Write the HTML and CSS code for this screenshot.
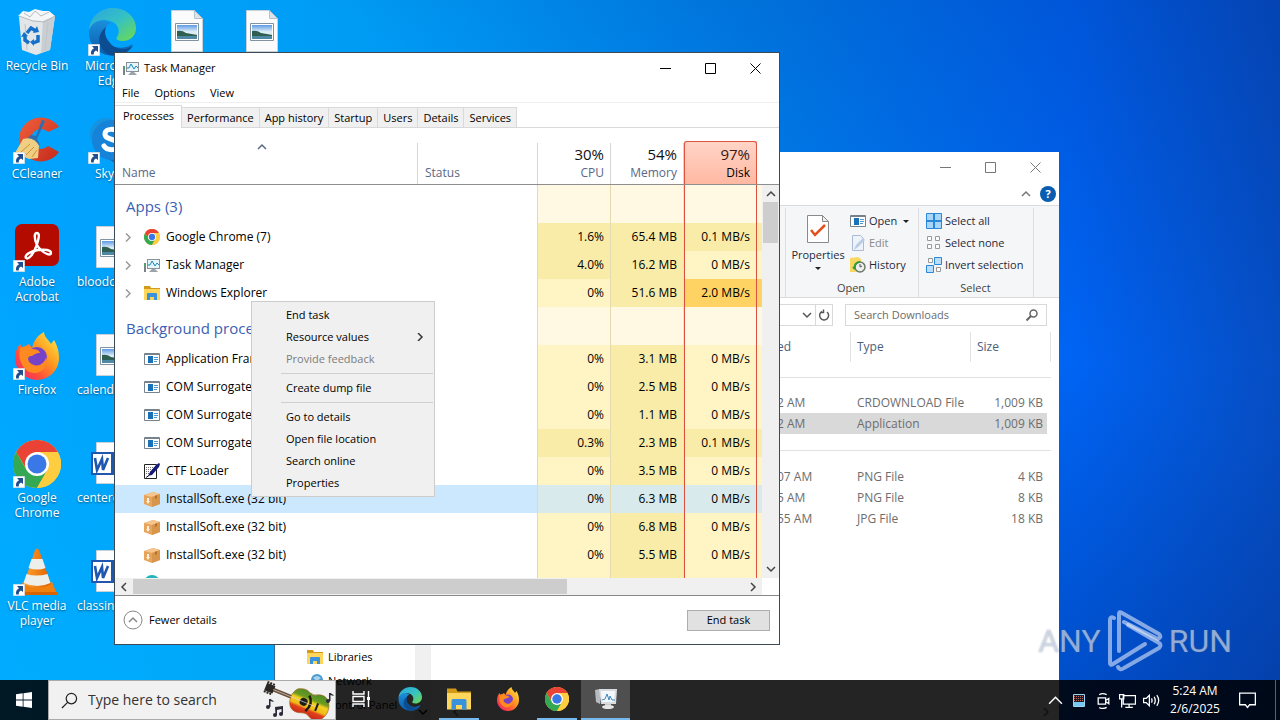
FILE: index.html
```html
<!DOCTYPE html>
<html lang="en">
<head>
<meta charset="utf-8">
<title>Desktop</title>
<link rel="stylesheet" href="styles.css">
</head>
<body>
<svg class="defs" aria-hidden="true">
  <defs>
    <linearGradient id="gEdgeA" x1="0" y1="0" x2="1" y2="1"><stop offset="0" stop-color="#2aa5e0"/><stop offset=".5" stop-color="#35c1c4"/><stop offset="1" stop-color="#6fdc4b"/></linearGradient>
    <linearGradient id="gEdgeB" x1="0" y1="0" x2="0" y2="1"><stop offset="0" stop-color="#1b8fdc"/><stop offset="1" stop-color="#0a5aa8"/></linearGradient>
    <linearGradient id="gFox" x1="1" y1="0" x2="0" y2="1"><stop offset="0" stop-color="#fff44f"/><stop offset=".4" stop-color="#ff9a1f"/><stop offset=".7" stop-color="#ff4a3c"/><stop offset="1" stop-color="#e8208a"/></linearGradient>
    <linearGradient id="gSky" x1="0" y1="0" x2="0" y2="1"><stop offset="0" stop-color="#5c9ae4"/><stop offset=".5" stop-color="#e4f1f8"/><stop offset="1" stop-color="#a4cce0"/></linearGradient>
    <linearGradient id="gRed" x1="0" y1="0" x2="1" y2="1"><stop offset="0" stop-color="#f0603c"/><stop offset="1" stop-color="#c42a1c"/></linearGradient>
    <linearGradient id="gCone" x1="0" y1="0" x2="1" y2="0"><stop offset="0" stop-color="#ffa12e"/><stop offset="1" stop-color="#e06000"/></linearGradient>
    <linearGradient id="gGuitar" x1="0" y1="0" x2="0" y2="1"><stop offset="0" stop-color="#4c8c28"/><stop offset=".3" stop-color="#6c9c20"/><stop offset=".42" stop-color="#f4d020"/><stop offset=".65" stop-color="#f0b818"/><stop offset=".75" stop-color="#e0401c"/><stop offset="1" stop-color="#c82818"/></linearGradient>
  </defs>
  <symbol id="shortcut" viewBox="0 0 12 12"><path fill="#fff" stroke="#b8c4d0" stroke-width=".5" d="M.2.2h11.6v11.6H.2z"/><path fill="#1f4f8f" d="M4 2h6v6L8 6.400Q5.500 7.500 5.800 10.500H3.200Q2 6.500 6 4.200z"/></symbol>
  <symbol id="recycle" viewBox="0 0 48 48"><path fill="#e3e6e8" d="M6 9l36-1-5 34-14 5-14-5z"/><path fill="#c9ced2" d="M30 12l12-4-5 34-9 3z"/><path fill="#f4f6f7" d="M5 8l5-5 6 1 6-3 8 2 6 0 6 5-12 5-12-1z"/><path fill="none" stroke="#b4babf" d="M11 5l6 4 5-6 6 5 8-4M6 8l14 5 11 1 11-6"/><path fill="none" stroke="#c0c5c9" d="M12 16l2 26M35 15l-3 27"/><g fill="none" stroke="#1470c8" stroke-width="3.500"><path d="M14 25l4-5 5 3M25 27l0 6-5 2M16 35l-4-3 0-5"/></g><path fill="#1470c8" d="M20 25l6-1-2-6zM21 31v7l-4-4zM8 29l7-1-4-4z"/></symbol>
  <symbol id="edge" viewBox="0 0 48 48"><path fill="url(#gEdgeB)" d="M1 23C3 13 14 9 23 15c-8 3-8 14-2 20s15 6 22 2c2-1 2 0 1 1C33 55 0 49 1 23z"/><path fill="#0c4d92" d="M18 19c-11 9-8 23 4 28 9 2 17-1 23-9-7 5-18 4-23-3-5-5-6-11-4-16z"/><path fill="url(#gEdgeA)" d="M1 22C2 8 13 0 25 0c14 0 23 10 23 20 0 8-6 13-13 13-5 0-8-2-6-4 4-6 1-14-7-16C13 10 4 14 1 22z"/></symbol>
  <symbol id="ccleaner" viewBox="0 0 48 48"><path fill="url(#gRed)" d="M46 11A22 22 0 1 0 46 36l-11-6a10 10 0 1 1 0-14z"/><path fill="#2c6fb0" d="M29 4l3 1-8 18 3 6-15-4 6-6 5 1z"/><path fill="#f1cf82" d="M10 23q11-3 16 7l-1 12-9 1-14-6z"/><path stroke="#c9923c" fill="none" d="M8 36l9-8M13 39l8-8M19 41l5-7"/></symbol>
  <symbol id="skype" viewBox="0 0 48 48"><circle cx="18" cy="18" r="16" fill="#1592e0"/><circle cx="31" cy="31" r="16" fill="#1166b8"/><circle cx="24" cy="24" r="20" fill="#1683d8"/><path fill="none" stroke="#fff" stroke-width="5" stroke-linecap="round" d="M31 17c-3-5-14-5-14 1 0 7 14 4 14 11 0 6-12 6-15 1"/></symbol>
  <symbol id="acrobat" viewBox="0 0 48 48"><rect x="2" width="44" height="42" rx="7" fill="#b40b00"/><path fill="none" stroke="#fff" stroke-width="2.400" stroke-linejoin="round" d="M24 21c-3-7-3-12 0-12s2 6-1 14-8 13-10 11c-2-3 5-7 12-8s13 0 13 3-6 1-10-3c-3-3-4-5-4-5z"/></symbol>
  <symbol id="firefox" viewBox="0 0 48 48"><path fill="url(#gFox)" d="M7 12l2 4 7-4 3 4C21 8 25 3 31 0c0 5 5 8 7 12l3-4c4 7 5 12 5 18A22 22 0 0 1 2 26C2 20 4 16 7 12z"/><circle cx="24" cy="25" r="10" fill="#7542c8"/><path fill="#ff8a20" d="M7 16c5-2 9-2 12 1 4 0 7 1 8 4-5 0-6 2-8 3-6-1-5 7 2 9 5 2 11-2 12-8 3 8-3 16-12 16S4 29 7 16z"/></symbol>
  <symbol id="chrome" viewBox="0 0 48 48"><circle cx="24" cy="24" r="24" fill="#ffcd40"/><path fill="#ea4335" d="M3.200 12A24 24 0 0 1 44.800 12H24L14 30z"/><path fill="#34a853" d="M3.200 12A24 24 0 0 0 24 48l10.400-18-20.800 0z"/><path fill="#ffcd40" d="M44.800 12A24 24 0 0 1 24 48l10.400-18L34 12z"/><circle cx="24" cy="24" r="12" fill="#fff"/><circle cx="24" cy="24" r="9.500" fill="#3b78e7"/></symbol>
  <symbol id="vlc" viewBox="0 0 48 48"><path fill="#f08010" d="M10 34h29l5 12H4z"/><path fill="#d86400" d="M4 44h40v3H4z"/><path fill="url(#gCone)" d="M22 2q2-3 4 0l12 34q-13 8-27 0z"/><path fill="#eeeeea" d="M18.500 11h11l3 9q-8 3-17 0zM13.500 26q10 3 21 0l3 9q-13 6-27 0z"/></symbol>
  <symbol id="picture" viewBox="0 0 32 42"><path fill="#fbfbfb" stroke="#c8d0d8" d="M.5.500h23l8 8v33H.5z"/><path fill="#dde3e8" stroke="#b8c0c8" d="M23.500.500v8h8z"/><path fill="#fff" stroke="#8392a0" d="M4.500 13.500h23v17h-23z"/><path fill="url(#gSky)" d="M6 15h20v14H6z"/><path fill="#2f5f50" d="M6 21q5-1 9 2l11 2v1H6z"/><path fill="#4d88a4" d="M6 26h20v3H6z"/></symbol>
  <symbol id="word" viewBox="0 0 37 42"><path fill="#fdfdfd" stroke="#c8d0d8" d="M5.500.500h24l7 8v33h-31z"/><path fill="#1e56b0" d="M0 10h23v23H0z"/><path fill="#fff" d="M2 12h18v19H2z"/><path fill="none" stroke="#1e56b0" stroke-width="2.600" d="M4 16l2 12 5-11 1 11 5-12"/></symbol>
  <symbol id="monitor" viewBox="0 0 16 16"><path fill="#8a9298" d="M3 2h13v10H3z"/><path fill="#e6f5fc" d="M4 3h11v8H4z"/><path fill="none" stroke="#1c86b4" d="M4 8h2l2-4 3 5 2-3 2 2"/><path fill="#79828a" d="M0 6h2v9H0z"/><path fill="#47a860" d="M0 7h2v2H0z"/><path fill="#9ca4aa" d="M8 12h3l3 3H5z"/></symbol>
  <symbol id="folder" viewBox="0 0 16 16"><path fill="#d29a18" d="M0 1h6l1 2h9v4H0z"/><path fill="#ffd65c" d="M0 4h16v11H0z"/><path fill="#3a92dc" d="M3 9q0-1 1-1h8q1 0 1 1v6h-3v-3H6v3H3z"/></symbol>
  <symbol id="app" viewBox="0 0 16 16"><path fill="#fff" stroke="#76838c" d="M.5 2.500h15v11H.5z"/><path fill="#76838c" d="M1 2h14v2H1z"/><path fill="#1971b8" d="M4 5h5v7H4z"/><path stroke="#4c98cc" d="M10 6.500h4M10 8.500h4M10 10.500h3"/></symbol>
  <symbol id="pen" viewBox="0 0 16 16"><path fill="#fff" stroke="#222" d="M.5 1.500h12v14H.5z"/><path stroke="#777" stroke-dasharray="1 1" d="M2 4.500h9M2 6.500h7M2 8.500h5M2 10.500h3"/><path fill="#151a78" d="M4 13l2-4 6-7 3-2 1 1-1 3-7 8z"/><path stroke="#090d30" d="M2 14.500l3-2"/></symbol>
  <symbol id="box" viewBox="0 0 16 16"><path fill="#e8a45a" d="M0 4l9-3 7 2v10l-8 3-8-3z"/><path fill="#f5c58d" d="M0 4l9-3 7 2-8 3z"/><path fill="#d8954c" d="M8 6l8-3v10l-8 3z"/><path fill="#fff1de" d="M3 7h2v3h1l-2 3-2-3h1z"/><path fill="#b86c2c" d="M11 5l2-1v3l-2 1z"/></symbol>
  <symbol id="teal" viewBox="0 0 16 16"><circle cx="8" cy="8" r="8" fill="#23b4bc"/></symbol>
  <symbol id="globe" viewBox="0 0 16 16"><circle cx="10" cy="7" r="6" fill="#4a9ad0"/><path fill="#a8d4ec" d="M6 5q4-4 8 0l-4 3z"/><path fill="#5a8fb4" d="M0 7h9v6H0z"/><path fill="#b7dced" d="M1 8h7v4H1z"/></symbol>
  <symbol id="chev" viewBox="0 0 8 8"><path fill="none" stroke="currentColor" stroke-width="1.500" d="M2 0l4 4-4 4"/></symbol>
  <symbol id="up" viewBox="0 0 10 10"><path fill="none" stroke="currentColor" stroke-width="1.500" d="M1 7l4-4 4 4"/></symbol>
  <symbol id="min" viewBox="0 0 11 11"><path stroke="currentColor" d="M0 5.500h11"/></symbol>
  <symbol id="max" viewBox="0 0 11 11"><path fill="none" stroke="currentColor" d="M.5.500h10v10H.5z"/></symbol>
  <symbol id="close" viewBox="0 0 11 11"><path stroke="currentColor" d="M.5.500l10 10M10.500.500l-10 10"/></symbol>
</svg>

<main class="desktop">
  <div class="shortcuts">
    <a class="shortcut" href="#"><span class="pic"><svg><use href="#recycle"/></svg></span>Recycle Bin</a>
    <a class="shortcut" href="#"><span class="pic"><svg><use href="#ccleaner"/></svg><svg class="arrow"><use href="#shortcut"/></svg></span>CCleaner</a>
    <a class="shortcut" href="#"><span class="pic"><svg><use href="#acrobat"/></svg><svg class="arrow"><use href="#shortcut"/></svg></span>Adobe Acrobat</a>
    <a class="shortcut" href="#"><span class="pic"><svg><use href="#firefox"/></svg><svg class="arrow"><use href="#shortcut"/></svg></span>Firefox</a>
    <a class="shortcut" href="#"><span class="pic"><svg><use href="#chrome"/></svg><svg class="arrow"><use href="#shortcut"/></svg></span>Google Chrome</a>
    <a class="shortcut" href="#"><span class="pic"><svg><use href="#vlc"/></svg><svg class="arrow"><use href="#shortcut"/></svg></span>VLC media player</a>
    <a class="shortcut" href="#"><span class="pic"><svg><use href="#edge"/></svg><svg class="arrow"><use href="#shortcut"/></svg></span>Microsoft Edge</a>
    <a class="shortcut" href="#"><span class="pic"><svg><use href="#skype"/></svg><svg class="arrow"><use href="#shortcut"/></svg></span>Skype</a>
    <a class="shortcut file" href="#"><span class="pic"><svg><use href="#picture"/></svg></span>bloodc</a>
    <a class="shortcut file" href="#"><span class="pic"><svg><use href="#picture"/></svg></span>calenda</a>
    <a class="shortcut file word" href="#"><span class="pic"><svg><use href="#word"/></svg></span>centerc</a>
    <a class="shortcut file word" href="#"><span class="pic"><svg><use href="#word"/></svg></span>classin</a>
    <a class="shortcut file third" href="#" aria-label="Picture"><span class="pic"><svg><use href="#picture"/></svg></span></a>
    <a class="shortcut file fourth" href="#" aria-label="Picture"><span class="pic"><svg><use href="#picture"/></svg></span></a>
  </div>

  <section class="window explorer" aria-label="Downloads">
    <div class="titlebar">
      <button class="winbtn" aria-label="Minimize"><svg><use href="#min"/></svg></button>
      <button class="winbtn" aria-label="Maximize"><svg><use href="#max"/></svg></button>
      <button class="winbtn" aria-label="Close"><svg><use href="#close"/></svg></button>
    </div>
    <div class="ribbon-top">
      <button class="plain" aria-label="Collapse ribbon"><svg class="s10"><use href="#up"/></svg></button>
      <button class="help" aria-label="Help">?</button>
    </div>
    <div class="ribbon">
      <div class="rgroup open">
        <div class="rbody">
          <button class="big"><svg viewBox="0 0 22 28"><path fill="#fff" stroke="#8a8a8a" d="M.5.500h15l6 6v21H.5z"/><path fill="#eee" stroke="#8a8a8a" d="M15.500.500v6h6z"/><path fill="none" stroke="#e2501c" stroke-width="2.500" d="M4 15l4 5 10-10"/></svg>Properties<i class="tri"></i></button>
          <div class="rlist">
            <button class="rbtn"><svg><use href="#app"/></svg>Open<i class="tri"></i></button>
            <button class="rbtn off"><svg viewBox="0 0 16 16"><path fill="#eef3fa" stroke="#a9bcd4" d="M2.500.500h8l3 3v12h-11z"/><path fill="#b9cce6" d="M4 15l2-5 7-7 2 2-7 7z"/></svg>Edit</button>
            <button class="rbtn"><svg viewBox="0 0 16 16"><path fill="#f8d860" d="M0 1l8-1 3 2v13H0z"/><circle cx="10" cy="10" r="5" fill="#eee" stroke="#6a7a6a" stroke-width="1.500"/><path fill="none" stroke="#2f9e3c" stroke-width="2" d="M10 5a5 5 0 0 0-5 7l-2-2"/><path fill="none" stroke="#555" d="M10 7v3l2-1"/></svg>History</button>
          </div>
        </div>
        <span class="rlabel">Open</span>
      </div>
      <div class="rgroup select">
        <div class="rbody"><div class="rlist">
          <button class="rbtn"><svg viewBox="0 0 16 16"><path fill="#a9d6f8" stroke="#2a88d8" d="M.5.500h15v15H.5z"/><path stroke="#2a88d8" stroke-width="2" d="M8 0v16M0 8h16"/></svg>Select all</button>
          <button class="rbtn"><svg viewBox="0 0 16 16"><path fill="#fff" stroke="#999" d="M1.500 1.500h4v4h-4zM9.500 1.500h4v4h-4zM1.500 9.500h4v4h-4zM9.500 9.500h4v4h-4z"/></svg>Select none</button>
          <button class="rbtn"><svg viewBox="0 0 16 16"><path fill="#fff" stroke="#999" d="M2.500 1.500h4v4h-4zM10.500 10.500h4v4h-4z"/><path fill="#b8defa" stroke="#2a88d8" d="M8.500.500h7v7h-7zM.5 8.500h7v7h-7z"/></svg>Invert selection</button>
        </div></div>
        <span class="rlabel">Select</span>
      </div>
    </div>
    <div class="address">
      <div class="path"><button class="plain" aria-label="Previous locations"><svg class="s10 down"><use href="#up"/></svg></button><button class="plain refresh" aria-label="Refresh"><svg class="s12" viewBox="0 0 12 12"><path fill="none" stroke="#555" stroke-width="1.500" d="M9 3a4.500 4.500 0 1 1-5-.5M5.500.500v3h-3"/></svg></button></div>
      <label class="search"><input type="text" placeholder="Search Downloads" aria-label="Search Downloads"><svg class="s12" viewBox="0 0 12 12"><circle cx="7.500" cy="4.500" r="3.500" fill="none" stroke="#666" stroke-width="1.500"/><path stroke="#666" stroke-width="2" d="M5 7l-4.500 4.500"/></svg></label>
    </div>
    <div class="panes">
      <nav class="tree">
        <a href="#"><svg><use href="#folder"/></svg>Libraries</a>
        <a href="#"><svg><use href="#globe"/></svg>Network</a>
        <a href="#"><svg><use href="#app"/></svg>Control Panel</a>
      </nav>
      <div class="vtrack"><svg class="s10 down"><use href="#up"/></svg></div>
      <div class="files">
        <table class="filetable">
          <colgroup><col><col class="c-type"><col class="c-size"></colgroup>
          <thead><tr><th>ed</th><th>Type</th><th>Size</th></tr></thead>
          <tbody class="first"><tr class="gap"><td colspan="3"></td></tr>
            <tr><td>2 AM</td><td>CRDOWNLOAD File</td><td>1,009 KB</td></tr>
            <tr class="chosen"><td>2 AM</td><td>Application</td><td>1,009 KB</td></tr></tbody>
          <tbody class="second"><tr class="gap"><td colspan="3"></td></tr>
            <tr><td>07 AM</td><td>PNG File</td><td>4 KB</td></tr>
            <tr><td>5 AM</td><td>PNG File</td><td>8 KB</td></tr>
            <tr><td>55 AM</td><td>JPG File</td><td>18 KB</td></tr></tbody>
        </table>
        <div class="fscroll"><svg class="s10 left"><use href="#up"/></svg><svg class="s10 right"><use href="#up"/></svg></div>
      </div>
    </div>
  </section>

  <section class="window taskmgr" aria-label="Task Manager">
    <div class="titlebar">
      <svg class="s16"><use href="#monitor"/></svg><h1>Task Manager</h1>
      <button class="winbtn" aria-label="Minimize"><svg><use href="#min"/></svg></button>
      <button class="winbtn" aria-label="Maximize"><svg><use href="#max"/></svg></button>
      <button class="winbtn" aria-label="Close"><svg><use href="#close"/></svg></button>
    </div>
    <div class="menubar"><button>File</button><button>Options</button><button>View</button></div>
    <div class="tabs"><button class="active">Processes</button><button>Performance</button><button>App history</button><button>Startup</button><button>Users</button><button>Details</button><button>Services</button></div>
    <div class="list">
      <div class="viewport">
        <table class="procs">
          <colgroup><col><col class="c-status"><col class="c-num"><col class="c-num"><col class="c-num"><col class="c-tail"></colgroup>
          <thead><tr>
            <th class="name"><svg class="s10 sort"><use href="#up"/></svg>Name</th><th class="status">Status</th>
            <th><b>30%</b>CPU</th><th><b>54%</b>Memory</th><th class="disk"><b>97%</b>Disk</th><th class="tail"></th></tr></thead>
          <tbody>
            <tr class="group"><th>Apps (3)</th><td></td><td></td><td></td><td></td><td></td></tr>
            <tr><td><span class="proc"><svg class="chev"><use href="#chev"/></svg><svg class="s16"><use href="#chrome"/></svg>Google Chrome (7)</span></td><td></td><td class="mid">1.6%</td><td class="mid">65.4 MB</td><td class="mid">0.1 MB/s</td><td class="mid"></td></tr>
            <tr><td><span class="proc"><svg class="chev"><use href="#chev"/></svg><svg class="s16"><use href="#monitor"/></svg>Task Manager</span></td><td></td><td class="mid">4.0%</td><td class="mid">16.2 MB</td><td>0 MB/s</td><td></td></tr>
            <tr><td><span class="proc"><svg class="chev"><use href="#chev"/></svg><svg class="s16"><use href="#folder"/></svg>Windows Explorer</span></td><td></td><td>0%</td><td class="mid">51.6 MB</td><td class="high">2.0 MB/s</td><td class="high"></td></tr>
            <tr class="group"><th>Background processes</th><td></td><td></td><td></td><td></td><td></td></tr>
            <tr><td><span class="proc flat"><svg class="s16"><use href="#app"/></svg>Application Frame Host</span></td><td></td><td>0%</td><td class="mid">3.1 MB</td><td>0 MB/s</td><td></td></tr>
            <tr><td><span class="proc flat"><svg class="s16"><use href="#app"/></svg>COM Surrogate</span></td><td></td><td>0%</td><td class="mid">2.5 MB</td><td>0 MB/s</td><td></td></tr>
            <tr><td><span class="proc flat"><svg class="s16"><use href="#app"/></svg>COM Surrogate</span></td><td></td><td>0%</td><td class="mid">1.1 MB</td><td>0 MB/s</td><td></td></tr>
            <tr><td><span class="proc flat"><svg class="s16"><use href="#app"/></svg>COM Surrogate</span></td><td></td><td class="mid">0.3%</td><td class="mid">2.3 MB</td><td class="mid">0.1 MB/s</td><td class="mid"></td></tr>
            <tr><td><span class="proc flat"><svg class="s16"><use href="#pen"/></svg>CTF Loader</span></td><td></td><td>0%</td><td class="mid">3.5 MB</td><td>0 MB/s</td><td></td></tr>
            <tr class="selected"><td><span class="proc flat"><svg class="s16"><use href="#box"/></svg>InstallSoft.exe (32 bit)</span></td><td></td><td>0%</td><td>6.3 MB</td><td>0 MB/s</td><td></td></tr>
            <tr><td><span class="proc flat"><svg class="s16"><use href="#box"/></svg>InstallSoft.exe (32 bit)</span></td><td></td><td>0%</td><td class="mid">6.8 MB</td><td>0 MB/s</td><td></td></tr>
            <tr><td><span class="proc flat"><svg class="s16"><use href="#box"/></svg>InstallSoft.exe (32 bit)</span></td><td></td><td>0%</td><td class="mid">5.5 MB</td><td>0 MB/s</td><td></td></tr>
            <tr><td><span class="proc flat"><svg class="s16"><use href="#teal"/></svg></span></td><td></td><td></td><td class="mid"></td><td></td><td></td></tr>
          </tbody>
        </table>
      </div>
      <div class="vscroll"><div class="bar"><svg class="s10"><use href="#up"/></svg><i class="thumb"></i><svg class="s10 down"><use href="#up"/></svg></div></div>
    </div>
    <div class="hscroll"><svg class="s10 left"><use href="#up"/></svg><div class="rail"><i class="thumb"></i></div><svg class="s10 right"><use href="#up"/></svg></div>
    <div class="footer">
      <button class="fewer"><svg viewBox="0 0 20 20"><circle cx="10" cy="10" r="9" fill="#fff" stroke="#888"/><path fill="none" stroke="#888" stroke-width="1.500" d="M6 12l4-4 4 4"/></svg>Fewer details</button>
      <button class="endtask">End task</button>
    </div>
  </section>

  <div class="context" role="menu">
    <button role="menuitem">End task</button>
    <button role="menuitem">Resource values<svg><use href="#chev"/></svg></button>
    <button role="menuitem" class="disabled">Provide feedback</button>
    <hr>
    <button role="menuitem">Create dump file</button>
    <hr>
    <button role="menuitem">Go to details</button>
    <button role="menuitem">Open file location</button>
    <button role="menuitem">Search online</button>
    <button role="menuitem">Properties</button>
  </div>

  <div class="watermark"><span>ANY</span><svg viewBox="0 0 56 62"><g fill="none" stroke="currentColor" stroke-width="4" stroke-linejoin="round" stroke-linecap="round"><path d="M12 41V4q0-3 3-1l37 21q3 3-1 5l-4-2-30-15"/><path d="M7 8q-4-2-4 2v43q0 3 3 1l32-20"/><path d="M11 57q2 4 6 1l35-20q3-3 0-5L21 15"/></g></svg><span>RUN</span></div>

  <footer class="taskbar">
    <button class="start" aria-label="Start"><svg viewBox="0 0 16 16"><path fill="#fff" d="M0 2.300l6.700-1v6.300H0zM7.500 1.200L16 0v7.600H7.500zM0 8.400h6.700v6.300L0 13.700zM7.500 8.400H16V16l-8.500-1.200z"/></svg></button>
    <label class="find"><svg viewBox="0 0 18 18"><circle cx="11" cy="7" r="5.500" fill="none" stroke="#222" stroke-width="1.300"/><path stroke="#222" stroke-width="1.300" d="M7 11l-6 6"/></svg><input type="text" placeholder="Type here to search" aria-label="Type here to search">
      <svg class="guitar" viewBox="0 0 72 38"><g transform="rotate(22 36 19)"><path fill="#6a4e38" d="M8 17h32v4H8z"/><path fill="#2c2624" d="M0 15h9v8H0z"/><path stroke="#2c2624" stroke-width="2" stroke-dasharray="2 1" d="M0 14h9M0 24h9"/><path fill="url(#gGuitar)" stroke="#a0601c" stroke-width=".6" d="M31 9q7-4 12-1 5 2 9-1c9-4 15 4 15 12s-6 16-15 12q-4-3-9-1-7 3-12-1c-5-5-5-15 0-20z"/><circle cx="41" cy="19" r="4" fill="#1d1a18"/><path fill="none" stroke="#1d1a18" stroke-width="2.500" d="M44 11q7 6 2 16"/><path stroke="#ddd" stroke-width=".6" d="M8 19h46"/><path stroke="#1d1a18" stroke-width="2" d="M55 15v8"/></g><g fill="#2b2b38"><circle cx="5" cy="26" r="2"/><path d="M6 18h1.500l3 2v1l-3-1v6H6z"/><circle cx="12" cy="34" r="2"/><circle cx="18" cy="33" r="2"/><path d="M12 26l8-1v8h-1.500v-5L14 29v5h-1.500z"/><circle cx="65" cy="20" r="2"/><path d="M66 12h1.500l3 2v1l-3-1v6H66z"/></g></svg></label>
    <button class="task" aria-label="Task view"><svg class="s20" viewBox="0 0 20 20"><path fill="none" stroke="#fff" stroke-width="1.400" d="M2 2v3h11V2M2 18v-3h11v3M2 7.500h11v5H2zM17.500 2v16"/><path fill="#fff" d="M16 8h3v3h-3z"/></svg></button>
    <button class="task" aria-label="Microsoft Edge"><svg><use href="#edge"/></svg></button>
    <button class="task running" aria-label="File Explorer"><svg><use href="#folder"/></svg></button>
    <button class="task" aria-label="Firefox"><svg><use href="#firefox"/></svg></button>
    <button class="task running" aria-label="Google Chrome"><svg><use href="#chrome"/></svg></button>
    <button class="task current" aria-label="Task Manager"><svg viewBox="0 0 24 24"><path fill="#b8bcc0" d="M1 3l5-1v15l-4-2z"/><path fill="#d8dcde" d="M5 2h18l-1 15H7z"/><path fill="#f2f8fc" d="M7 4h14l-1 11H8z"/><path fill="none" stroke="#3c88c0" d="M8 13l3-1 2-5 2 6 1-4 2 4h3"/><path fill="#c8cccf" d="M11 17h6v2h-6z"/><ellipse cx="14" cy="20" rx="6" ry="2" fill="#e4e6e8"/></svg></button>
    <div class="tray">
      <button aria-label="Show hidden icons"><svg viewBox="0 0 16 16"><path fill="none" stroke="#fff" stroke-width="1.400" d="M2 11l6-6 6 6"/></svg></button>
      <button aria-label="Monitor"><svg class="s12" viewBox="0 0 12 13"><path fill="#1c1c28" stroke="#9ad4f4" d="M.5.500h11v12H.5z"/><path stroke="#b86a5a" stroke-dasharray="1 1" d="M1 2.500h10M1 4.500h10M1 6.500h10"/><path fill="#78c8f4" d="M1 8h10v4H1z"/></svg></button>
      <button aria-label="Meet now"><svg viewBox="0 0 16 16"><path fill="none" stroke="#fff" stroke-width="1.200" d="M3 5.500h7v6H3zM10 8l3-2v5l-3-2M4 2.500q3-2 7 0M4 14.500q3 2 7 0"/></svg></button>
      <button aria-label="Network"><svg viewBox="0 0 16 16"><path fill="none" stroke="#fff" stroke-width="1.200" d="M4 3.500h11.500v8H4zM9.500 11.500v3M6 14.500h7M.5 2.500h4v4h-4zM2.500 6.500v8"/></svg></button>
      <button aria-label="Volume"><svg viewBox="0 0 16 16"><path fill="none" stroke="#fff" stroke-width="1.200" d="M.5 6h2.500l3-3v10l-3-3H.5zM8 6q1 2 0 4M10.500 4.500q2 3.500 0 7M13 3q3.500 5 0 10"/></svg></button>
      <time class="clock" datetime="2025-02-06T05:24"><span>5:24 AM</span><span>2/6/2025</span></time>
      <button class="notice" aria-label="Notifications"><svg viewBox="0 0 16 16"><path fill="none" stroke="#fff" stroke-width="1.200" d="M.6 1h14.800v11H10l-2 2.500L6 12H.6z"/></svg></button>
    </div>
  </footer>
</main>
</body>
</html>
```
FILE: styles.css
```css
* { box-sizing: border-box; }
html, body { height: 100%; margin: 0; }
body, button, input { font-family: "Open Sans", "Noto Sans", sans-serif; font-size: 11px; line-height: 16px; }
body { color: #000; overflow: hidden; }
button { background: none; border: 0; margin: 0; padding: 0; color: inherit; }
a { color: inherit; text-decoration: none; }
svg { display: block; flex: none; }
table { border-collapse: separate; border-spacing: 0; table-layout: fixed; width: 100%; font-size: 12px; line-height: 16px; }
th { font-weight: 400; text-align: left; }
td, th { padding: 0; }
.defs { position: absolute; width: 0; height: 0; }
.s10 { width: 10px; height: 10px; }
.s12 { width: 12px; height: 12px; }
.s16 { width: 16px; height: 16px; }
.down { transform: rotate(180deg); }
.left { transform: rotate(-90deg); }
.right { transform: rotate(90deg); }

.desktop {
  position: relative; height: 100vh; overflow: hidden;
  background:
    linear-gradient(0deg, rgba(0, 30, 110, .35) 0%, transparent 50%) right / 38% 100% no-repeat,
    linear-gradient(205deg, rgba(0, 40, 130, .3) 0%, transparent 35%),
    linear-gradient(0deg, rgba(0, 200, 255, .25) 0%, transparent 70%) left / 50% 100% no-repeat,
    linear-gradient(90deg, #00a4ff 0%, #009cf4 28%, #007ce8 60%, #0064f4 84%, #0650c8 100%);
}

.shortcuts { display: grid; grid-template-columns: 74px repeat(3, 75px); grid-template-rows: repeat(6, 108px); grid-auto-flow: column; padding-top: 8px; color: #fff; }
.shortcut { display: flex; flex-direction: column; align-items: center; font-size: 12px; line-height: 15px; text-align: center; padding: 0 4px; text-shadow: 0 1px 2px rgba(0, 0, 0, .5); }
.pic { position: relative; display: block; width: 48px; height: 50px; flex: none; }
.pic > svg { width: 48px; height: 48px; }
.pic > .arrow { position: absolute; left: 0; bottom: 2px; width: 12px; height: 12px; }
.file { align-items: flex-start; padding: 0 3px; }
.file .pic { align-self: center; padding: 2px 8px; }
.file .pic > svg { width: 32px; height: 42px; }
.word .pic { padding-left: 3px; }
.word .pic > svg { width: 37px; }
.third { grid-column: 3; grid-row: 1; }
.fourth { grid-column: 4; grid-row: 1; }

.window { position: absolute; display: flex; flex-direction: column; background: #fff; }
.titlebar { display: flex; align-items: center; height: 30px; flex: none; justify-content: flex-end; padding-right: 1px; }
.winbtn { width: 45px; height: 28px; display: grid; place-items: center; }
.winbtn svg { width: 11px; height: 11px; }

.explorer { left: 274px; right: 221px; top: 152px; bottom: 0; border-left: 1px solid #2b6a9a; }
.explorer .titlebar, .ribbon-top { color: #777; }
.ribbon-top { display: flex; justify-content: flex-end; align-items: center; gap: 9px; height: 23px; padding-right: 3px; }
.help { width: 16px; height: 16px; border-radius: 50%; background: #0a5cb0; color: #fff; font-weight: 700; }
.ribbon { display: flex; justify-content: flex-end; height: 93px; flex: none; background: #f5f6f7; border: 1px solid #dadbdc; border-width: 1px 0; padding: 2px 25px 0 0; color: #1e2a3c; }
.rgroup { display: flex; flex-direction: column; justify-content: space-between; align-items: stretch; border-right: 1px solid #dcdde0; padding-top: 2px; }
.rgroup.open { border-left: 1px solid #dcdde0; padding-left: 6px; padding-right: 8px; width: 134px; }
.rgroup.select { width: 115px; padding-left: 7px; padding-right: 8px; }
.rlabel { text-align: center; line-height: 18px; color: #444; }
.rbody { display: flex; gap: 6px; }
.big { display: flex; flex-direction: column; align-items: center; padding-top: 5px; width: 52px; }
.big svg { width: 22px; height: 28px; margin-bottom: 4px; }
.big .tri { margin-top: 4px; }
.tri { border: 3px solid transparent; border-top-color: #222; border-bottom-width: 0; }
.rbtn { display: flex; align-items: center; gap: 3px; height: 22px; white-space: nowrap; }
.rbtn svg { width: 16px; height: 16px; }
.rbtn .tri { margin-left: 3px; }
.off { color: #888; }
.address { display: flex; justify-content: flex-end; gap: 12px; padding: 6px 12px 6px 0; color: #555; }
.path, .search { display: flex; align-items: center; height: 22px; border: 1px solid #d9d9d9; }
.path { flex: 1; justify-content: flex-end; }
.path .plain { display: grid; place-items: center; width: 17px; height: 20px; }
.path .refresh { border-left: 1px solid #d9d9d9; }
.search { width: 202px; padding: 0 8px; }
.search input { flex: 1; min-width: 0; border: 0; outline: 0; padding: 0; background: none; }
.search input::placeholder { color: #6b6b6b; opacity: 1; }
.panes { display: flex; flex: 1; min-height: 0; }
.tree { width: 140px; display: flex; flex-direction: column; justify-content: flex-end; padding: 0 0 3px 32px; }
.tree a { display: flex; align-items: center; gap: 5px; height: 24px; white-space: nowrap; }
.tree svg { width: 16px; height: 16px; }
.vtrack { width: 16px; background: #f0f0f0; display: flex; align-items: flex-end; justify-content: center; padding-bottom: 3px; }
.files { flex: 1; min-width: 0; display: flex; flex-direction: column; justify-content: space-between; padding: 0 8px 0 20px; color: #6d6d6d; }
.c-type { width: 120px; }
.c-size { width: 80px; }
.filetable th { height: 30px; border-right: 1px solid #e2e2e2; padding-left: 6px; color: #4c607a; }
.filetable td { height: 21px; padding-left: 6px; white-space: nowrap; }
.filetable td:first-child, .filetable th:first-child { padding-left: 326px; }
.filetable td:last-child { text-align: right; padding: 0 8px 0 0; }
.filetable .gap td { height: 30px; background: linear-gradient(#e2e2e2, #e2e2e2) 0 15px / 100% 1px no-repeat; }
.filetable .second .gap td { height: 32px; background-position: 0 16px; }
.chosen td { background: #d9d9d9; }
.filetable .chosen td:last-child { border-right: 4px solid #fff; padding-right: 4px; }
.fscroll { display: flex; justify-content: space-between; padding-bottom: 3px; }

.taskmgr { left: 114px; right: 500px; top: 52px; bottom: 75px; border: 1px solid #3c4a58; }
.taskmgr .titlebar { padding-left: 8px; }
.taskmgr h1 { flex: 1; margin: 0 0 0 5px; font-size: 11px; font-weight: 400; }
.menubar { display: flex; gap: 15px; height: 20px; padding-left: 7px; border-bottom: 1px solid #f0f0f0; }
.tabs { display: flex; align-items: flex-end; height: 25px; flex: none; border-bottom: 1px solid #d9d9d9; }
.tabs button { height: 20px; padding: 0 5px; background: #f0f0f0; border: 1px solid #d9d9d9; border-width: 1px 1px 0 0; white-space: nowrap; }
.tabs .active { height: 23px; padding: 0 7px 2px 8px; background: #fff; margin-bottom: -1px; }
.list { display: flex; flex: 1; min-height: 0; overflow: hidden; }
.viewport { flex: 1; overflow: hidden; }
.c-status { width: 120px; }
.c-num { width: 73px; }
.c-tail { width: 5px; }
.procs thead th { height: 57px; vertical-align: bottom; padding: 0 7px 3px; border-bottom: 1px solid #8e8e8e; text-align: right; color: #5a6885; background: linear-gradient(#d5d5d5, #d5d5d5) right bottom / 1px 41px no-repeat; }
.procs thead .name, .procs thead .status { text-align: left; }
.procs thead b { display: block; font-size: 15px; line-height: 22px; font-weight: 400; color: #111; }
.procs thead th:nth-child(n+3) { line-height: 16px; }
.sort { display: block; margin: 0 auto 13px 135px; }
.procs thead .disk { position: relative; background: linear-gradient(#ffd5c8, #ffb8a2) 0 100% / 100% 43px no-repeat; color: #000; }
.procs thead .disk b { color: #3a1a10; }
.procs thead .disk::before { content: ""; position: absolute; inset: 13px 0 0; border: 1px solid #e0543c; border-bottom: 0; border-radius: 3px 3px 0 0; }
.procs thead .tail { padding: 0; background: none; }
.procs tbody tr > * { height: 28px; white-space: nowrap; }
.procs td:nth-child(2) { border-right: 1px solid #e4dab0; }
.procs td:nth-child(n+3) { text-align: right; padding-right: 6px; background: #fff4c4; }
.procs td:nth-child(3) { border-right: 1px solid #e4dab0; }
.procs td:nth-child(4) { border-right: 1px solid #f0e4b4; }
.procs td:nth-child(5) { border: 1px solid #dc5040; border-width: 0 1px; }
.procs td:nth-child(6) { padding: 0; }
.procs td.mid:nth-child(n+3) { background: #f9eca8; }
.procs td.high:nth-child(n+3) { background: #ffd264; }
.procs .group > * { height: 38px; }
.procs .group th { font-size: 15px; padding: 4px 0 0 11px; color: #3a5fb4; }
.procs .group td:nth-child(n+3) { background: #fff9e4; }
.procs .selected td { background: #cce8ff; }
.procs .selected td:nth-child(n+3) { background: #d8eaec; }
.proc { display: flex; align-items: center; gap: 6px; padding-left: 9px; overflow: hidden; }
.proc .chev { width: 8px; height: 9px; color: #999; margin-right: 6px; }
.flat { padding-left: 29px; }
.vscroll { width: 17px; padding-top: 56px; display: flex; }
.bar { flex: 1; display: flex; flex-direction: column; align-items: center; background: #f0f0f0; border-top: 1px solid #8e8e8e; padding: 4px 0; color: #444; }
.bar .thumb { width: 15px; height: 41px; background: #cdcdcd; margin: 3px 0 auto; }
.hscroll { display: flex; align-items: center; gap: 4px; height: 17px; flex: none; padding: 0 4px; margin-right: 17px; background: #f0f0f0; color: #444; }
.rail { flex: 1; height: 15px; }
.rail .thumb { display: block; width: 71%; height: 15px; background: #cdcdcd; }
.footer { display: flex; align-items: center; justify-content: space-between; height: 49px; flex: none; padding: 0 9px 0 8px; border-top: 1px solid #888; }
.fewer { display: flex; align-items: center; gap: 6px; }
.fewer svg { width: 20px; height: 20px; }
.endtask { width: 83px; height: 21px; line-height: 18px; background: #e1e1e1; border: 1px solid #adadad; }

.context { position: absolute; left: 251px; top: 301px; width: 184px; padding: 2px 1px; background: #f0f0f0; border: 1px solid #ccc; display: flex; flex-direction: column; }
.context button { display: flex; align-items: center; justify-content: space-between; height: 22px; padding: 0 9px 0 33px; }
.context svg { width: 8px; height: 8px; color: #333; }
.context hr { width: calc(100% - 28px); height: 1px; margin: 3px 0 3px 28px; border: 0; background: #cfcfcf; }
.context .disabled { color: #7c7c7c; }

.watermark { position: absolute; right: 48px; bottom: 48px; display: flex; align-items: center; gap: 6px; color: rgba(222, 232, 250, .6); font-family: Roboto, sans-serif; font-size: 32px; line-height: 62px; text-shadow: 0 0 2px rgba(90, 100, 120, .5); }
.watermark svg { width: 56px; height: 62px; }

.taskbar { position: absolute; left: 0; right: 0; bottom: 0; height: 40px; display: flex; background: rgba(0, 0, 0, .86); color: #fff; }
.start { width: 48px; display: grid; place-items: center; }
.start svg { width: 16px; height: 16px; }
.find { width: 288px; display: flex; align-items: center; padding-left: 12px; background: #f1f1f1; border: 1px solid #aaa; }
.find > svg { width: 17px; height: 17px; }
.find input { flex: 1; min-width: 0; padding: 0 0 0 10px; border: 0; outline: 0; background: none; font-size: 14px; line-height: 20px; }
.find input::placeholder { color: #333; opacity: 1; }
.find > .guitar { width: 72px; height: 38px; }
.task { width: 49px; display: grid; place-items: center; border-bottom: 2px solid transparent; }
.task svg { width: 24px; height: 24px; }
.task .s20 { width: 20px; height: 20px; }
.running { background: linear-gradient(#76b9ed, #76b9ed) center bottom / 40px 2px no-repeat border-box; }
.current { background: #4f4f4f; border-bottom-color: #76b9ed; }
.tray { display: flex; align-items: center; margin-left: auto; padding-right: 4px; }
.tray button { width: 24px; height: 40px; display: grid; place-items: center; }
.tray svg { width: 17px; height: 17px; }
.tray .s12 { width: 12px; height: 13px; }
.clock { width: 64px; display: flex; flex-direction: column; align-items: center; font-size: 12px; line-height: 18px; }
.tray .notice { width: 49px; border-right: 1px solid #5a6470; padding-right: 8px; }
```
